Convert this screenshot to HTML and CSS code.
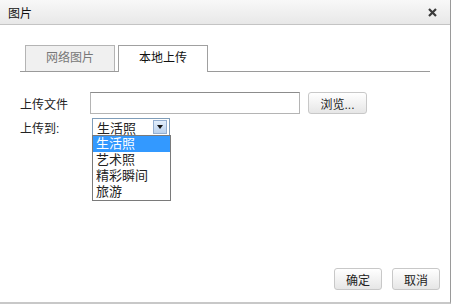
FILE: index.html
```html
<!DOCTYPE html>
<html>
    <head>
        <title>图片</title>
        <meta charset="utf-8">
        <link rel="stylesheet" href="styles.css">
    </head>
    <body>
        <div class="dialog">
            <div class="titlebar">
                <span class="title">图片</span>
                <svg class="close" width="9" height="9" viewBox="0 0 9 9">
                    <path d="M1 1 L8 8 M8 1 L1 8" stroke="#3a3a3a" stroke-width="2.2" fill="none"/>
                </svg>
            </div>

            <div class="content">
                <div class="tabs">
                    <div class="tab">网络图片</div>
                    <div class="tab active">本地上传</div>
                </div>

                <div class="row first">
                    <span class="label">上传文件</span>
                    <div class="file-input"></div>
                    <button class="btn browse">浏览...</button>
                </div>

                <div class="row">
                    <span class="label">上传到:</span>
                    <div class="select-wrap">
                        <div class="select">
                            <span class="value">生活照</span>
                            <span class="arrow"><span class="tri"></span></span>
                        </div>
                        <ul class="options">
                            <li class="selected">生活照</li>
                            <li>艺术照</li>
                            <li>精彩瞬间</li>
                            <li>旅游</li>
                        </ul>
                    </div>
                </div>

                <div class="footer">
                    <button class="btn">确定</button>
                    <button class="btn">取消</button>
                </div>
            </div>
        </div>
    </body>
</html>
```

FILE: styles.css
```css
body {margin: 0px; font-family: "Liberation Sans", "Noto Sans CJK SC", sans-serif; font-size: 12px; color: #222;}

.dialog {width: 450px; height: 302px; background: #fff; border-right: 1px solid #9a9a9a; border-bottom: 2px solid #c8c8c8; display: flex; flex-direction: column;}

.titlebar {height: 24px; display: flex; justify-content: space-between; align-items: center; padding: 0px 13px 0px 8px; background: linear-gradient(#f8f8f8, #e8e8e8); border-bottom: 1px solid #c4c4c4;}
.title {font-size: 12px; color: #111;}

.content {flex: 1; display: flex; flex-direction: column; padding: 20px 20px 12px 20px;}

.tabs {display: flex; gap: 3px; padding-left: 5px; border-bottom: 1px solid #9a9a9a; height: 26px;}
.tab {width: 88px; height: 25px; line-height: 25px; text-align: center; border: 1px solid #b4b4b4; border-bottom: none; background: #f0f0f0; color: #777; font-size: 12px;}
.tab.active {background: #fff; color: #111; height: 26px; border-color: #a0a0a0;}

.row {display: flex; align-items: center; margin-top: 4px; height: 18px;}
.row.first {margin-top: 20px; height: 22px;}
.label {width: 70px;}

.file-input {width: 208px; height: 20px; border: 1px solid #b4b4b4; border-top-color: #8c8c8c;}

.btn {font-family: inherit; font-size: 12px; color: #222; height: 22px; padding: 0px; border: 1px solid #c8c8c8; border-radius: 3px; background: linear-gradient(#ffffff, #e6e6e6);}
.browse {width: 59px; margin-left: 8px;}

.select-wrap {position: relative; margin-left: 2px;}
.select {width: 76px; height: 16px; border: 1px solid #7f9db9; display: flex; align-items: center; justify-content: space-between;}
.value {padding-left: 4px; font-size: 13px;}
.arrow {width: 12px; height: 12px; margin-right: 2px; background: linear-gradient(#e3eefb, #b9d1ee); border: 1px solid #93aed0; display: flex; align-items: center; justify-content: center;}
.tri {width: 0px; height: 0px; border-left: 3px solid transparent; border-right: 3px solid transparent; border-top: 4px solid #111;}

.options {position: absolute; left: 0px; top: 17px; width: 77px; margin: 0px; padding: 0px; list-style: none; border: 1px solid #7a7a7a; background: #fff;}
.options li {height: 16px; line-height: 16px; padding-left: 3px; font-size: 13px;}
.options li.selected {background: #3399ff; color: #fff;}

.footer {margin-top: auto; margin-right: -10px; display: flex; justify-content: flex-end; gap: 10px;}
.footer .btn {width: 48px;}
```
